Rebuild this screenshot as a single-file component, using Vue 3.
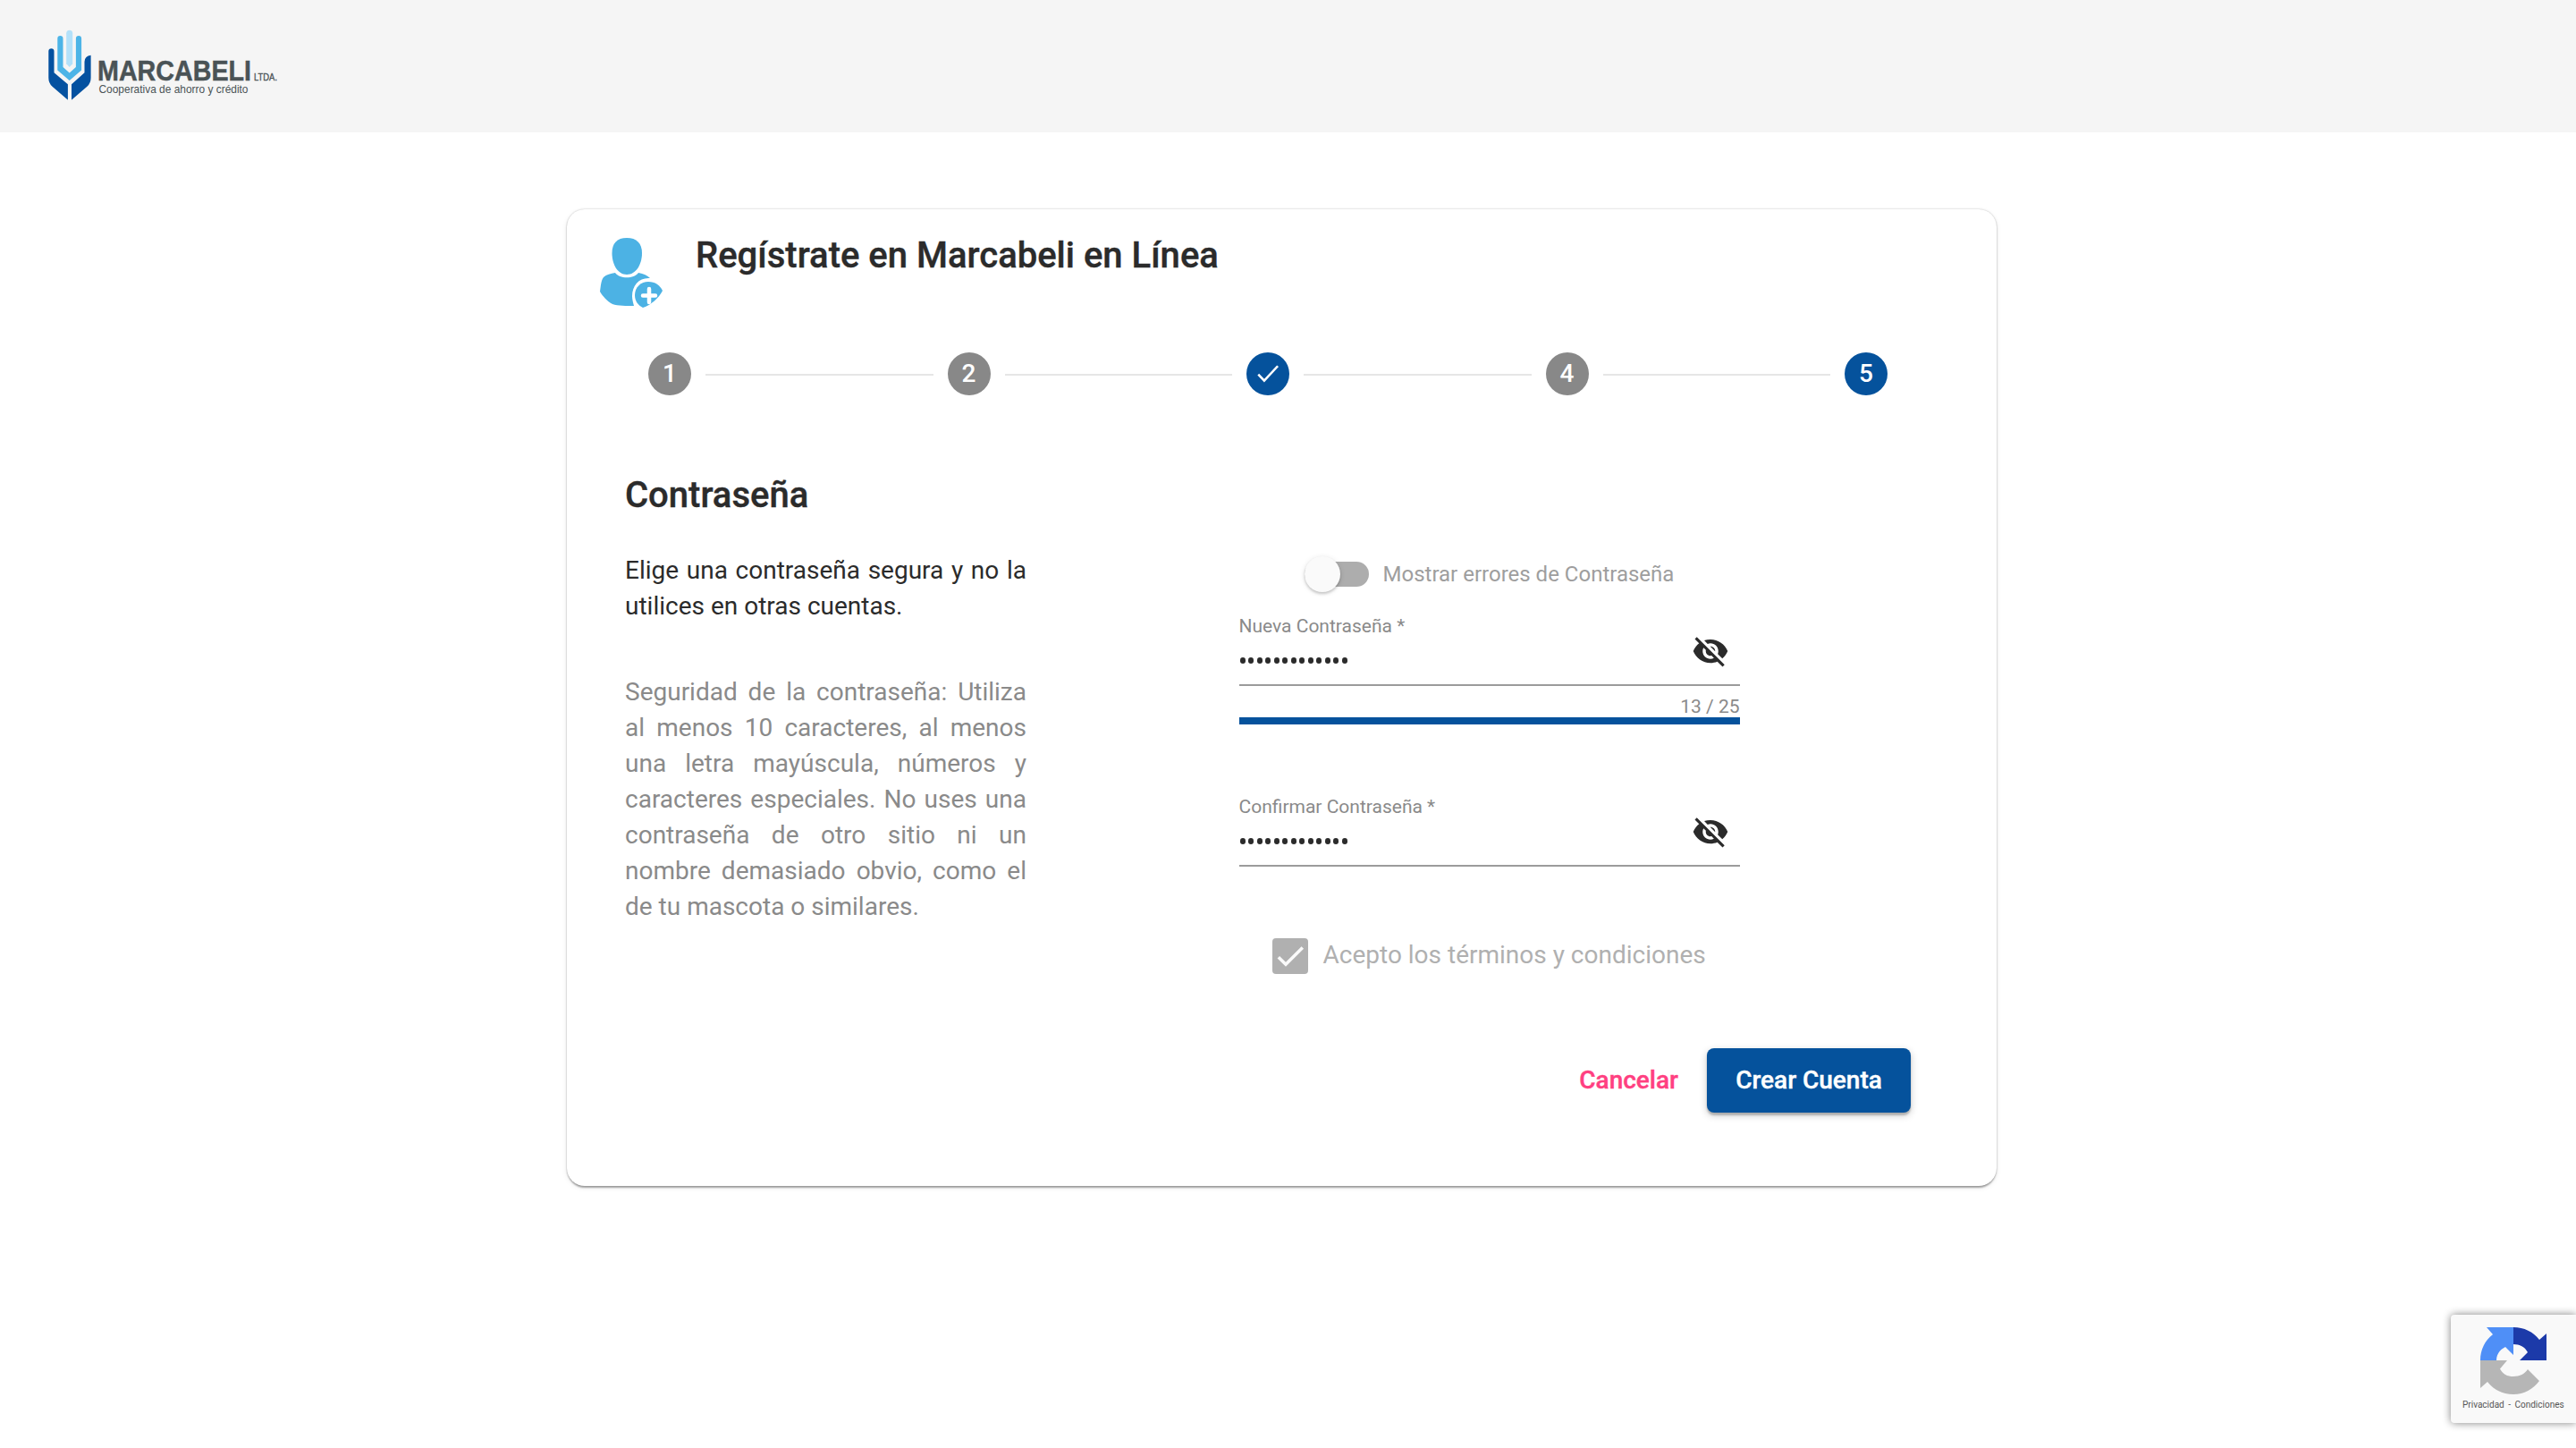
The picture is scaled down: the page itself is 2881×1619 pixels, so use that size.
<template>
  <div class="page">
    <header class="topbar">
      <svg class="brand" viewBox="0 0 260 80">
        <path fill="#b3e1fa" d="M20.2 4.300a3.500 3.500 0 0 1 7 0v34l-3.500 3.800-3.500-3.800z" />
        <path
          fill="#4cb4e7"
          d="M10.300 10.200a3.100 3.100 0 0 1 6.200 0v31.800l7.200 6.500 7.200-6.500V10.200a3.100 3.100 0 0 1 6.200 0v35.300L23.700 57 10.300 45.500z"
        />
        <path
          fill="#0451a0"
          d="M.3 24.300a3.100 3.100 0 0 1 6.200 0v24l15.400 13v17.500L4.500 63.800Q.3 60 .3 54z"
        />
        <path
          fill="#0451a0"
          d="M47.600 28.800V54q0 6-4.200 9.800L26 78.800V61.300l14.500-13V36q.3-6.500 7.100-7.200z"
        />
        <text class="brand-name" x="55" y="57" textLength="172" lengthAdjust="spacingAndGlyphs">MARCABELI</text>
        <text class="brand-suffix" x="230" y="57" textLength="26" lengthAdjust="spacingAndGlyphs">LTDA.</text>
        <text class="brand-tagline" x="56.5" y="70.5" textLength="167" lengthAdjust="spacingAndGlyphs">Cooperativa de ahorro y crédito</text>
      </svg>
    </header>

    <main class="card">
      <div class="card-header">
        <svg class="user-icon" viewBox="0 0 70 78">
          <path
            fill="#4cb2e4"
            d="M30 0c11 0 17 6 17 17 0 13-7 24-17 24S13.500 30 13.500 17C13.500 6 19 0 30 0z"
          />
          <path
            fill="#4cb2e4"
            d="M17 39c5 7 21 7 26 0 6 1 10 3 13 6-12-1-20 8-20 20 0 4 1 7 2 11-8 0-18 0-24-2C8 71 3 65 0 60c1-6 1-12 4-16 3-3 8-4 13-5z"
          />
          <path
            fill="#4cb2e4"
            d="M54 49c8 0 13 4 16 10-4 8-13 16-22 19-6-3-9-8-9-14 0-9 7-15 15-15z"
          />
          <path stroke="#fff" stroke-width="4.500" stroke-linecap="round" d="M55 57v15M48 64.500h14" />
        </svg>
        <h1>Regístrate en Marcabeli en Línea</h1>
      </div>

      <div class="stepper">
        <template v-for="(step, index) in steps" :key="step.id">
          <div v-if="index > 0" class="step-line"></div>
          <div class="step" :class="{ active: step.active }">
            <svg v-if="step.done" class="step-check" viewBox="0 0 24 24">
              <path d="M2.800 12.500l5.700 6L21.500 4.500" />
            </svg>
            <span v-else>{{ step.id }}</span>
          </div>
        </template>
      </div>

      <div class="content">
        <section class="info">
          <h2>Contraseña</h2>
          <p class="lead">Elige una contraseña segura y no la utilices en otras cuentas.</p>
          <p class="hint">
            Seguridad de la contraseña: Utiliza al menos 10 caracteres, al menos una letra
            mayúscula, números y caracteres especiales. No uses una contraseña de otro sitio ni un
            nombre demasiado obvio, como el de tu mascota o similares.
          </p>
        </section>

        <section class="form">
          <div class="toggle">
            <div class="toggle-track"><div class="toggle-thumb"></div></div>
            <span class="toggle-label">Mostrar errores de Contraseña</span>
          </div>

          <div v-for="field in fields" :key="field.label" class="field">
            <div class="field-box">
              <div>
                <div class="field-label">{{ field.label }} *</div>
                <div class="dots">
                  <i v-for="n in field.length" :key="n"></i>
                </div>
              </div>
              <svg class="eye" viewBox="0 0 24 24">
                <path
                  d="M12 7c2.76 0 5 2.24 5 5 0 .65-.13 1.26-.36 1.83l2.92 2.92c1.510-1.260 2.700-2.890 3.430-4.750-1.730-4.390-6-7.500-11-7.500-1.400 0-2.740.25-3.980.7l2.160 2.160C10.740 7.130 11.350 7 12 7zM2 4.270l2.280 2.280.46.46C3.080 8.300 1.780 10.020 1 12c1.730 4.390 6 7.500 11 7.500 1.550 0 3.030-.3 4.380-.84l.42.42L19.730 22 21 20.730 3.270 3 2 4.270zM7.530 9.800l1.550 1.550c-.05.21-.08.43-.08.65 0 1.660 1.340 3 3 3 .22 0 .44-.03.65-.08l1.550 1.550c-.67.33-1.410.53-2.200.53-2.760 0-5-2.240-5-5 0-.79.2-1.530.53-2.200zm4.310-.78l3.150 3.150.02-.16c0-1.660-1.340-3-3-3l-.17.01z"
                />
              </svg>
            </div>
            <template v-if="field.max">
              <div class="counter">{{ field.length }} / {{ field.max }}</div>
              <div class="strength"></div>
            </template>
          </div>

          <div class="terms">
            <div class="checkbox">
              <svg viewBox="0 0 24 24"><path d="M4.100 12.700L9 17.600 20.300 6.300" /></svg>
            </div>
            <span>Acepto los términos y condiciones</span>
          </div>
        </section>
      </div>

      <div class="actions">
        <button class="btn-cancel">Cancelar</button>
        <button class="btn-submit">Crear Cuenta</button>
      </div>
    </main>

    <aside class="recaptcha">
      <svg class="recaptcha-logo" viewBox="0 0 74 75">
        <path fill="#1c3aa9" d="M37 0c12 0 22 5 29 14l8-7v30H44l9-9c-3-6-9-9-16-9z" />
        <path fill="#4f8ff7" d="M37 0v31l-9-9c-6 3-10 8-10 15H0c0-12 5-22 14-29L7 0z" />
        <path
          fill="#b6b6b6"
          d="M0 37h30l-8 9.500c3 6 8 8.500 15 8.500s13-3 16-8l13 13c-7 9-17 15-29 15S15 70 8 61l-8 7z"
        />
      </svg>
      <div class="recaptcha-links">Privacidad<span>-</span>Condiciones</div>
    </aside>
  </div>
</template>

<script setup>
import { ref } from "vue";

const steps = ref([
  { id: 1 },
  { id: 2 },
  { id: 3, active: true, done: true },
  { id: 4 },
  { id: 5, active: true },
]);

const fields = ref([
  { label: "Nueva Contraseña", length: 13, max: 25 },
  { label: "Confirmar Contraseña", length: 13 },
]);
</script>

<style>
body {
  margin: 0;
  background: #fff;
}
</style>

<style scoped>
.page {
  position: relative;
  box-sizing: border-box;
  height: 1619px;
  overflow: hidden;
  font-family: Roboto, sans-serif;
  color: #2b2b2b;
}

.topbar {
  box-sizing: border-box;
  height: 148px;
  padding: 33px 0 0 54px;
  background: #f5f5f5;
}

.brand {
  display: block;
  width: 260px;
  height: 80px;
  font-family: "Liberation Sans", sans-serif;
}

.brand text {
  fill: #4a5356;
}

.brand-name {
  font-size: 32px;
  font-weight: bold;
  stroke: #4a5356;
  stroke-width: 0.5px;
}

.brand-suffix {
  font-size: 10.5px;
  stroke: #4a5356;
  stroke-width: 0.3px;
}

.brand-tagline {
  font-size: 13px;
}

.card {
  box-sizing: border-box;
  width: 1599px;
  height: 1092px;
  margin: 86px 0 0 634px;
  border-radius: 20px;
  box-shadow: 0 4px 2px -2px rgba(0, 0, 0, 0.2), 0 2px 2px rgba(0, 0, 0, 0.14),
    0 0 2px rgba(0, 0, 0, 0.25), 0 2px 6px rgba(0, 0, 0, 0.08);
}

.card-header {
  display: flex;
  height: 160px;
  padding-left: 37px;
}

.user-icon {
  width: 70px;
  height: 78px;
  margin-top: 32px;
  fill: none;
}

h1,
h2 {
  margin: 0;
  font-size: 40px;
  font-weight: 500;
  line-height: 48px;
  -webkit-text-stroke: 0.4px #2b2b2b;
}

h1 {
  margin: 28px 0 0 37px;
}

.stepper {
  display: flex;
  align-items: center;
  width: 1386px;
  padding-left: 91px;
}

.step {
  display: flex;
  align-items: center;
  justify-content: center;
  width: 48px;
  height: 48px;
  border-radius: 50%;
  background: #888;
  color: #fff;
  font-size: 28px;
  font-weight: 500;
}

.step span {
  margin-top: -1px;
}

.step.active {
  background: #05529c;
}

.step-check {
  width: 28px;
  height: 28px;
  fill: none;
  stroke: #fff;
  stroke-width: 2.2;
}

.step-line {
  flex: 1;
  height: 2px;
  margin: 2px 16px 0;
  background: #e6e6e6;
}

.content {
  display: flex;
  height: 682px;
}

.info {
  width: 449px;
  padding: 88px 0 0 65px;
}

.info p {
  margin: 0;
  font-size: 28px;
  line-height: 40px;
  text-align: justify;
}

.info .lead {
  margin-top: 40px;
}

.info .hint {
  margin-top: 56px;
  color: #8a8a8a;
}

.form {
  width: 560px;
  margin: 180px 0 0 237.5px;
}

.toggle {
  display: flex;
  align-items: center;
  height: 40px;
  margin-left: 73px;
}

.toggle-track {
  display: flex;
  align-items: center;
  width: 72px;
  height: 28px;
  margin-right: 16px;
  border-radius: 14px;
  background: #adadad;
}

.toggle-thumb {
  flex: none;
  width: 40px;
  height: 40px;
  border-radius: 50%;
  background: #fafafa;
  box-shadow: 0 2px 3px rgba(0, 0, 0, 0.18), 0 1px 6px rgba(0, 0, 0, 0.1);
}

.toggle-label {
  color: #9e9e9e;
  font-size: 24px;
  white-space: nowrap;
}

.field {
  height: 178px;
  padding-top: 24px;
}

.field-box {
  display: flex;
  justify-content: space-between;
  box-sizing: border-box;
  height: 81px;
  border-bottom: 2px solid #9b9b9b;
}

.field-label {
  color: #8a8a8a;
  font-size: 21px;
  line-height: 28px;
  white-space: nowrap;
}

.dots {
  display: flex;
  gap: 3.5px;
  padding: 21px 0 0 1px;
}

.dots i {
  width: 6px;
  height: 6.5px;
  border-radius: 50%;
  background: #2b2b2b;
}

.eye {
  width: 42px;
  height: 42px;
  margin: 21px 12px 0 0;
  fill: #2b2b2b;
}

.counter {
  height: 35px;
  color: #8a8a8a;
  font-size: 21px;
  line-height: 46px;
  text-align: right;
}

.strength {
  height: 8px;
  background: #05529c;
}

.terms {
  display: flex;
  align-items: center;
  margin: -17px 0 0 37px;
  color: #b0b0b0;
  font-size: 28px;
  line-height: 40px;
  white-space: nowrap;
}

.terms span {
  margin-top: -3px;
}

.checkbox {
  width: 40px;
  height: 40px;
  margin-right: 17px;
  border-radius: 4px;
  background: #b0b0b0;
}

.checkbox svg {
  display: block;
  width: 40px;
  height: 40px;
  fill: none;
  stroke: #fafafa;
  stroke-width: 2.1;
}

.actions {
  display: flex;
  align-items: center;
  justify-content: flex-end;
  margin-top: 48px;
  padding-right: 96px;
}

button {
  border: 0;
  font: 500 28px/71px Roboto, sans-serif;
  white-space: nowrap;
  -webkit-text-stroke: 0.4px currentColor;
}

.btn-cancel {
  padding: 0 32px 1px;
  background: none;
  color: #ff4081;
}

.btn-submit {
  width: 228px;
  height: 72px;
  padding: 0 0 1px;
  border-radius: 8px;
  background: #05529c;
  color: #fff;
  box-shadow: 0 3px 2px rgba(0, 0, 0, 0.2), 0 3px 9px rgba(0, 0, 0, 0.22);
}

/* badge pinned over the page's bottom right corner */
.recaptcha {
  position: absolute;
  top: 1470px;
  right: 0;
  width: 140px;
  height: 121px;
  border-radius: 4px 0 0 4px;
  background: #f9f9f9;
  box-shadow: 0 0 10px #808080;
}

.recaptcha-logo {
  display: block;
  width: 74px;
  height: 75px;
  margin: 14px 0 0 33px;
}

.recaptcha-links {
  padding: 5px 0 0 13px;
  color: #555;
  font-size: 10px;
  line-height: 14px;
  white-space: nowrap;
}

.recaptcha-links span {
  margin: 0 4.5px;
}
</style>
